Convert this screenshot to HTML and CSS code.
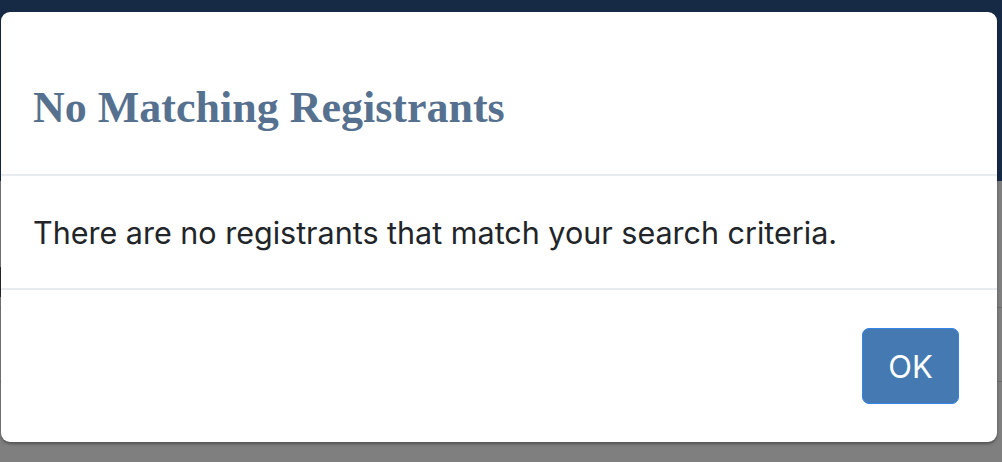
FILE: index.html
```html
<!DOCTYPE html>
<html lang="en">
<head>
<meta charset="utf-8">
<title>No Matching Registrants</title>
<link rel="stylesheet" href="styles.css">
</head>
<body>
<div class="page">
  <div class="topbar"></div>
  <div class="content">
    <div class="row row-first"><span class="edge-mark"></span></div>
    <div class="row row-second"></div>
  </div>
</div>
<div class="modal" role="dialog" aria-labelledby="modal-title">
  <div class="modal-header">
    <h2 class="modal-title" id="modal-title">No Matching Registrants</h2>
  </div>
  <div class="modal-body">
    <p>There are no registrants that match your search criteria.</p>
  </div>
  <div class="modal-footer">
    <button class="btn-ok" type="button">OK</button>
  </div>
</div>
</body>
</html>
```

FILE: styles.css
```css
* {
  box-sizing: border-box;
}

html, body {
  margin: 0;
  padding: 0;
}

body {
  width: 1002px;
  height: 462px;
  overflow: hidden;
  background: #7f7f7f;
  font-family: Inter, "Liberation Sans", sans-serif;
}

.page {
  display: flex;
  flex-direction: column;
}

.topbar {
  height: 181px;
  background: #172a45;
}

.content {
  display: flex;
  flex-direction: column;
}

.row {
  border-bottom: 1px solid #6c6c6c;
}

.row-first {
  height: 127px;
  padding-top: 86px;
}

.edge-mark {
  display: block;
  width: 2px;
  height: 30px;
  background: #2a2a2a;
}

.row-second {
  height: 74px;
}

.modal {
  position: absolute;
  left: 1px;
  top: 12px;
  width: 996px;
  background: #ffffff;
  border-radius: 9px;
  box-shadow: 0 2px 3px rgba(0, 0, 0, 0.35);
  display: flex;
  flex-direction: column;
}

.modal-header {
  height: 164px;
  padding: 70px 32px 0;
  border-bottom: 2px solid #e9ecef;
}

.modal-title {
  margin: 0;
  font-family: "Liberation Serif", "Times New Roman", serif;
  font-weight: bold;
  font-size: 44px;
  line-height: 52px;
  color: #56718f;
}

.modal-body {
  height: 112px;
  padding: 34px 32px 0;
}

.modal-body p {
  margin: 0;
  font-size: 30.5px;
  line-height: 45px;
  color: #212529;
}

.modal-footer {
  height: 154px;
  border-top: 2px solid #e9ecef;
  display: flex;
  justify-content: flex-end;
  align-items: center;
  padding: 0 38px;
}

.btn-ok {
  width: 97px;
  height: 76px;
  padding: 0;
  background: #4479b2;
  border: 1px solid #3584e8;
  border-radius: 7px;
  color: #ffffff;
  font-family: Inter, "Liberation Sans", sans-serif;
  font-size: 31px;
  line-height: 1;
}
```
